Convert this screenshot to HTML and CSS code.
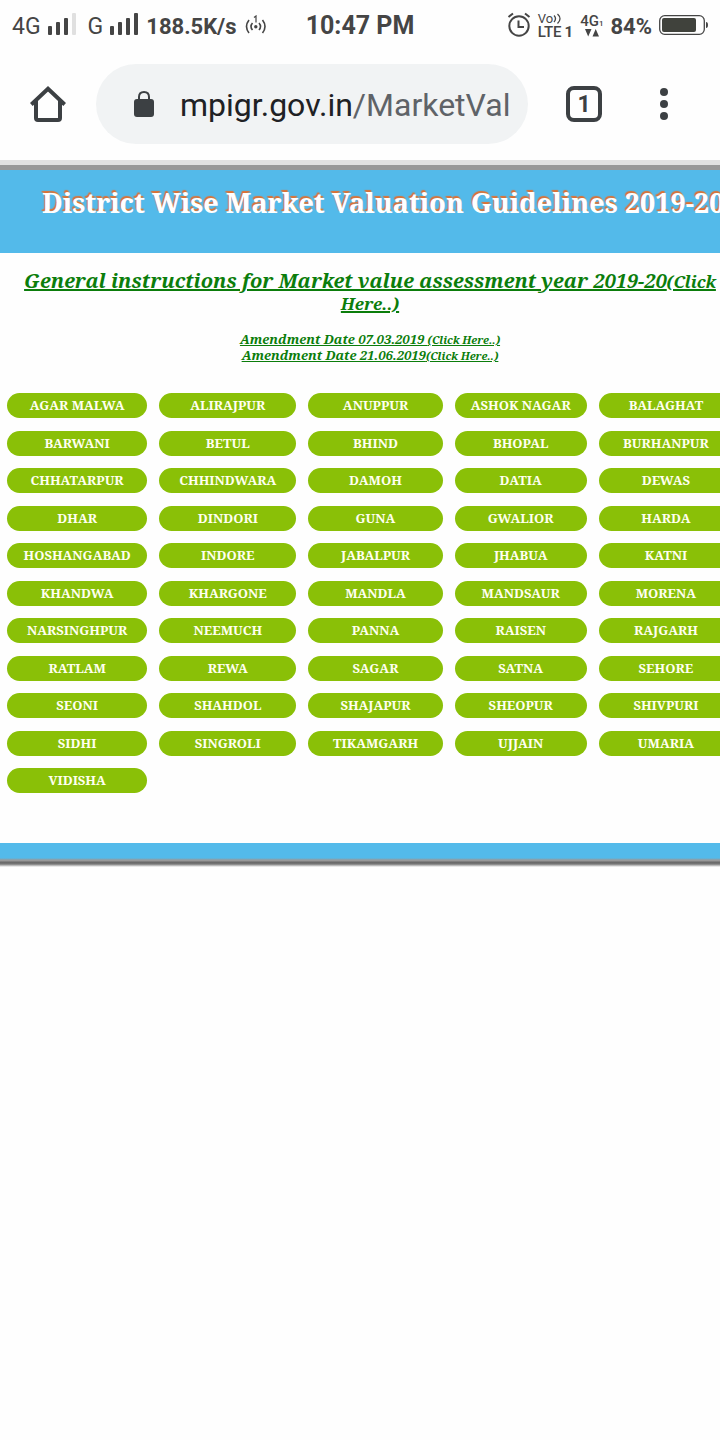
FILE: index.html
```html
<!DOCTYPE html>
<html lang="en">
<head>
<meta charset="utf-8">
<meta name="viewport" content="width=device-width, initial-scale=1">
<title>District Wise Market Valuation Guidelines</title>
<link rel="stylesheet" href="styles.css">
</head>
<body>
<header class="status">
  <div class="status-left">
    <span class="net">4G</span>
    <svg class="signal" width="28" height="22" viewBox="0 0 28 22"><g fill="#454545"><rect x="0" y="13" width="4" height="9" rx="1"/><rect x="8" y="9" width="4" height="13" rx="1"/><rect x="16" y="5" width="4" height="17" rx="1"/></g><rect x="24" y="0" width="4" height="22" rx="1" fill="#e0e0e0"/></svg>
    <span class="net net-second">G</span>
    <svg class="signal" width="28" height="22" viewBox="0 0 28 22"><g fill="#454545"><rect x="0" y="13" width="4" height="9" rx="1"/><rect x="8" y="9" width="4" height="13" rx="1"/><rect x="16" y="5" width="4" height="17" rx="1"/><rect x="24" y="0" width="4" height="22" rx="1"/></g></svg>
    <span class="speed">188.5K/s</span>
    <svg class="hotspot" width="22" height="20" viewBox="0 0 22 20" fill="none" stroke="#454545" stroke-width="1.6"><path d="M4 5Q-1 11.500 4 18M7.500 8Q4.500 11.500 7.500 15M14 8Q17 11.500 14 15M17.500 5Q22.500 11.500 17.500 18"/><circle cx="10.800" cy="11.700" r="1.700" fill="#454545" stroke="none"/><path stroke-width="1.200" d="M9 2.500L11 1V7.500"/></svg>
  </div>
  <time class="clock">10:47 PM</time>
  <div class="status-right">
    <svg width="24" height="26" viewBox="0 0 24 26" fill="none" stroke="#454545" stroke-width="2"><circle cx="12" cy="14" r="9.700"/><path d="M11.500 8.500V15H17M1.500 5L6 1.500M22.500 5L18 1.500"/></svg>
    <div class="volte">
      <span class="volte-top">Vo<svg width="9" height="11" viewBox="0 0 9 11" fill="none" stroke="#454545" stroke-width="1.300"><path d="M1 2.500Q4 5.500 1 9M4.500 1Q9.500 5.500 4.500 10.500"/></svg></span>
      <span class="volte-bottom">LTE<b>1</b></span>
    </div>
    <div class="data">
      <span class="data-top">4G<small>1</small></span>
      <svg width="14" height="8" viewBox="0 0 14 8" fill="#454545"><path d="M0 0H6.500L3.200 7.500ZM7.500 7.500H14L10.700 0Z"/></svg>
    </div>
    <span class="percent">84%</span>
    <svg width="49" height="20" viewBox="0 0 49 20"><rect x=".7" y=".7" width="44.600" height="18.600" rx="5" fill="none" stroke="#454545" stroke-width="1.300"/><rect x="3" y="3" width="34" height="14" rx="2" fill="#40423c"/><path d="M47 7q2 0 2 3t-2 3z" fill="#454545"/></svg>
  </div>
</header>

<nav class="toolbar">
  <button class="icon-button" type="button" aria-label="Home"><svg width="36" height="36" viewBox="0 0 36 36" fill="none" stroke="#3c4043" stroke-width="4"><path d="M1.300 18.500L18 2.800L34.700 18.500M6 15V32Q6 34 8 34H28Q30 34 30 32V15"/></svg></button>
  <a class="address" href="#" aria-label="Site address">
    <svg width="20" height="26" viewBox="0 0 20 26"><rect y="8" width="20" height="18" rx="3" fill="#3c4043"/><path d="M5 9V6Q5 1 10 1T15 6V9" fill="none" stroke="#3c4043" stroke-width="2"/></svg>
    <span class="url">mpigr.gov.in<span class="path">/MarketVal</span></span>
  </a>
  <button class="tabs" type="button" aria-label="Open tabs">1</button>
  <button class="icon-button menu" type="button" aria-label="Menu"><svg width="8" height="32" viewBox="0 0 8 32" fill="#3c4043"><circle cx="4" cy="4" r="4"/><circle cx="4" cy="16" r="4"/><circle cx="4" cy="28" r="4"/></svg></button>
</nav>

<main class="page">
  <h1 class="banner">District Wise Market Valuation Guidelines 2019-2020</h1>
  <section class="notices">
    <a class="general" href="#">General instructions for Market value assessment year 2019-20<small>(Click Here..)</small></a>
    <div class="amendments">
      <a href="#">Amendment Date 07.03.2019 <small>(Click Here..)</small></a>
      <a href="#">Amendment Date 21.06.2019<small>(Click Here..)</small></a>
    </div>
  </section>
  <section class="districts" aria-label="Districts">
    <button type="button">AGAR MALWA</button><button type="button">ALIRAJPUR</button><button type="button">ANUPPUR</button><button type="button">ASHOK NAGAR</button><button type="button">BALAGHAT</button>
    <button type="button">BARWANI</button><button type="button">BETUL</button><button type="button">BHIND</button><button type="button">BHOPAL</button><button type="button">BURHANPUR</button>
    <button type="button">CHHATARPUR</button><button type="button">CHHINDWARA</button><button type="button">DAMOH</button><button type="button">DATIA</button><button type="button">DEWAS</button>
    <button type="button">DHAR</button><button type="button">DINDORI</button><button type="button">GUNA</button><button type="button">GWALIOR</button><button type="button">HARDA</button>
    <button type="button">HOSHANGABAD</button><button type="button">INDORE</button><button type="button">JABALPUR</button><button type="button">JHABUA</button><button type="button">KATNI</button>
    <button type="button">KHANDWA</button><button type="button">KHARGONE</button><button type="button">MANDLA</button><button type="button">MANDSAUR</button><button type="button">MORENA</button>
    <button type="button">NARSINGHPUR</button><button type="button">NEEMUCH</button><button type="button">PANNA</button><button type="button">RAISEN</button><button type="button">RAJGARH</button>
    <button type="button">RATLAM</button><button type="button">REWA</button><button type="button">SAGAR</button><button type="button">SATNA</button><button type="button">SEHORE</button>
    <button type="button">SEONI</button><button type="button">SHAHDOL</button><button type="button">SHAJAPUR</button><button type="button">SHEOPUR</button><button type="button">SHIVPURI</button>
    <button type="button">SIDHI</button><button type="button">SINGROLI</button><button type="button">TIKAMGARH</button><button type="button">UJJAIN</button><button type="button">UMARIA</button>
    <button type="button">VIDISHA</button>
  </section>
  <footer class="page-footer"></footer>
</main>
</body>
</html>
```

FILE: styles.css
```css
* { box-sizing: border-box; }

body {
  margin: 0;
  background: #fefefe;
  font-family: Roboto, sans-serif;
  overflow-x: hidden;
}

button { border: 0; padding: 0; background: none; cursor: pointer; }
a { color: inherit; }
small { line-height: 1px; }
svg { display: block; flex: none; }

/* Status bar */
.status {
  display: grid;
  grid-template-columns: 1fr auto 1fr;
  align-items: center;
  height: 50px;
  padding: 0 12px;
  color: #454545;
  white-space: nowrap;
}
.status-left, .status-right { display: flex; align-items: center; }
.status-right { justify-content: flex-end; gap: 7px; }
.net { font-size: 23px; line-height: 24px; padding-top: 3px; margin-right: 7px; }
.net-second { margin-left: 12px; }
.signal { margin-bottom: 3px; }
.speed { font-size: 22px; font-weight: 700; margin: 2px 8px 0; }
.clock { font-size: 25px; font-weight: 700; }
.percent { font-size: 22px; font-weight: 700; padding-top: 2px; }
.volte, .data { display: flex; flex-direction: column; }
.volte-top { display: flex; align-items: center; font-size: 13px; line-height: 13px; }
.volte-bottom { font-size: 15px; line-height: 14px; font-weight: 500; }
.volte-bottom b { margin-left: 3px; }
.data { align-items: center; }
.data-top { font-size: 15px; line-height: 16px; font-weight: 500; }
.data-top small { font-size: 8px; }

/* Browser toolbar */
.toolbar {
  display: flex;
  align-items: center;
  height: 110px;
  padding: 0 30px 2px;
}
.icon-button { flex: none; }
.address {
  flex: 1;
  display: flex;
  align-items: center;
  gap: 26px;
  height: 80px;
  margin: 0 38px 0 30px;
  padding: 0 16px 0 38px;
  border-radius: 40px;
  background: #f1f3f4;
  text-decoration: none;
  white-space: nowrap;
  overflow: hidden;
}
.url { font-size: 32px; line-height: 40px; padding-top: 2px; color: #202124; }
.path { color: #5f6368; }
.tabs {
  width: 36px;
  height: 36px;
  border: 4px solid #3c4043;
  border-radius: 8px;
  color: #3c4043;
  font: 700 23px/30px Roboto, sans-serif;
}
.menu { margin: 0 22px 0 58px; }

/* Page content */
.page {
  border-top: 5px solid #e2e2e2;
  font-family: "Noto Serif", "Droid Serif", "DejaVu Serif Condensed", "DejaVu Serif", serif;
  overflow: hidden;
}
.banner {
  height: 88px;
  margin: 0;
  padding: 16px 0 0 42px;
  border-top: 5px solid #999;
  background: #53baea;
  color: #fff;
  font-size: 27px;
  line-height: 34px;
  font-weight: 700;
  text-shadow: -1px -2px 1px #e07030;
  white-space: nowrap;
}
.notices {
  padding: 17px 0 0 20px;
  color: #0b7d0b;
  font-weight: 700;
  font-style: italic;
  text-align: center;
}
.general { display: block; font-size: 20px; line-height: 22px; }
.general small { font-size: 17px; }
.amendments {
  display: flex;
  flex-direction: column;
  align-items: center;
  padding-top: 17px;
  font-size: 13px;
  line-height: 16px;
}
.amendments small { font-size: 11px; }
.districts {
  display: grid;
  grid-template-columns: 140fr 137fr 134fr 132fr 134fr;
  grid-auto-rows: 25px;
  column-gap: 12px;
  align-content: space-between;
  height: 400px;
  margin: 30px -13px 50px 7px;
}
.districts button {
  border-radius: 13px;
  background: #8ac007;
  color: #fffff0;
  font: inherit;
  font-size: 13px;
  line-height: 25px;
  font-weight: 700;
  white-space: nowrap;
}
.page-footer {
  height: 24px;
  background: linear-gradient(#53baea 15px, #999 17px, #999 18px, #666 19px, #777 21px, #fefefe 24px);
}
```
